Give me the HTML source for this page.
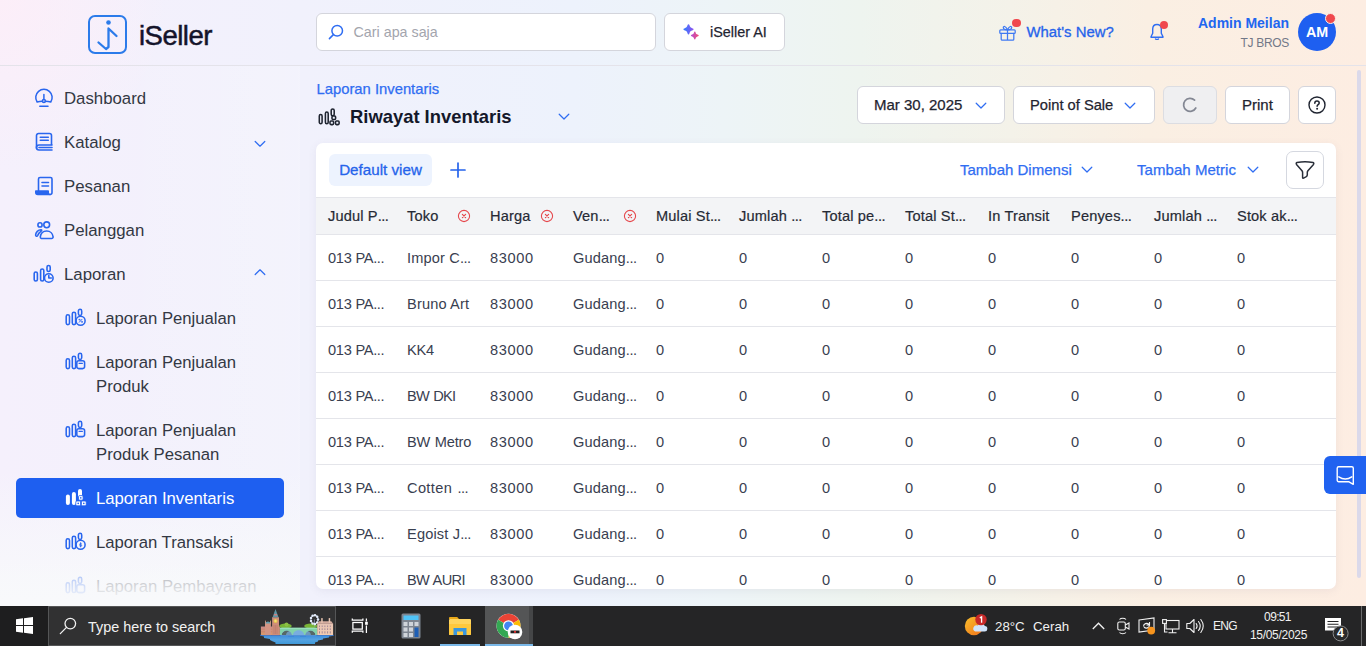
<!DOCTYPE html>
<html><head><meta charset="utf-8"><title>iSeller</title>
<style>
*{box-sizing:border-box;margin:0;padding:0}
html,body{width:1366px;height:646px;overflow:hidden}
body{font-family:"Liberation Sans",sans-serif;color:#2b2f3a;position:relative;
background:radial-gradient(circle at 0 0,rgba(253,238,248,.9) 0,rgba(253,238,248,0) 170px),linear-gradient(90deg,#f5f0fc 0%,#f1f1fc 22%,#edf2fc 42%,#edf4f7 53%,#eef4ef 63%,#f4f2e9 74%,#faefe3 84%,#fdede2 100%);}
svg{position:absolute;overflow:visible}
.t{position:absolute;white-space:nowrap}
#hdr{position:absolute;left:0;top:0;width:1366px;height:66px;border-bottom:1px solid #e4e3ea}
#logo{position:absolute;left:88px;top:15px;width:39px;height:39px;border:2px solid #2b7bea;border-radius:7px}
#brand{position:absolute;left:139px;top:17.500px;font-size:27.500px;line-height:36px;color:#14142b;letter-spacing:-0.500px;-webkit-text-stroke:.5px #14142b}
#search{position:absolute;left:316px;top:13px;width:340px;height:38px;background:#fff;border:1px solid #d4d5dc;border-radius:6px}
#search span{position:absolute;left:36.500px;top:0;line-height:36px;font-size:14.300px;color:#a3a5ad}
#ai{position:absolute;left:664px;top:13px;width:121px;height:38px;background:#fff;border:1px solid #d4d5dc;border-radius:6px}
#ai span{position:absolute;left:45px;top:0;line-height:36px;font-size:14.400px;color:#1f2430;-webkit-text-stroke:.25px #1f2430}
/* sidebar */
.mi{position:absolute;left:64px;margin-top:1px;font-size:16.8px;line-height:24px;color:#333843;white-space:nowrap}
.si{position:absolute;left:96px;margin-top:1px;font-size:16.700px;line-height:24px;color:#333843;white-space:nowrap}
#active{position:absolute;left:16px;top:478px;width:268px;height:40px;background:#1e5ff0;border-radius:5px}
#sov{position:absolute;left:0;top:66px;width:300px;height:540px;background:linear-gradient(90deg,rgba(255,255,255,0) 35%,rgba(255,255,255,.18) 100%)}
#sbg{position:absolute;left:0;top:470px;width:300px;height:136px;background:linear-gradient(180deg,rgba(248,249,251,0) 0%,rgba(248,249,251,.55) 50%,rgba(248,249,251,.95) 100%)}
#fade{position:absolute;left:0;top:562px;width:300px;height:44px;background:linear-gradient(180deg,rgba(248,249,251,0) 0%,rgba(248,249,251,.6) 50%,rgba(248,249,251,1) 92%)}
/* main */
.btn{position:absolute;top:86px;height:38px;background:#fff;border:1px solid #d4d5dc;border-radius:6px;font-size:15px;line-height:36px;color:#1f2430;white-space:nowrap;-webkit-text-stroke:.25px #1f2430}
.btn span{position:absolute;top:0}
#card{position:absolute;left:316px;top:143px;width:1020px;height:446px;background:#fff;border-radius:7px;overflow:hidden;box-shadow:0 2px 8px rgba(110,100,130,.09)}
#thead{position:absolute;left:0;top:54px;width:1020px;height:38px;background:#f3f4f6;border-top:1px solid #e4e5ea;border-bottom:1px solid #e4e5ea}
.th{position:absolute;top:0;line-height:36px;font-size:14.600px;color:#262a35;white-space:nowrap;letter-spacing:.15px;-webkit-text-stroke:.2px #262a35}
.e{letter-spacing:-.5px}
.n{letter-spacing:.65px !important}
.c0{letter-spacing:-.25px !important}
.xi{top:11px}
.row{position:absolute;left:0;width:1020px;height:46px;border-bottom:1px solid #e4e5ea}
.td{position:absolute;top:0;line-height:47px;font-size:14.600px;color:#394050;white-space:nowrap;letter-spacing:.15px}
#task{position:absolute;left:0;top:606px;width:1366px;height:40px;background:#252526;color:#fff}

</style></head><body>
<div id="hdr">
 <div id="logo"><svg style="left:0;top:0" width="35" height="35" viewBox="0 0 35 35"><circle cx="18.500" cy="5.500" r="2.300" fill="#2b7bea"/><path d="M8.5 25.5l7.5 6.5 2.5-2V11.5l8 7.5" fill="none" stroke="#2b7bea" stroke-width="2.300" stroke-linecap="round" stroke-linejoin="round"/></svg></div>
 <div id="brand">iSeller</div>
 <div id="search"><svg style="left:11px;top:10px" width="16" height="16" viewBox="0 0 16 16"><circle cx="9.2" cy="6.8" r="5.3" fill="none" stroke="#2f6df2" stroke-width="1.5"/><path d="M5.4 10.6L1.4 14.6" stroke="#2f6df2" stroke-width="1.5" stroke-linecap="round"/></svg><span>Cari apa saja</span></div>
 <div id="ai"><svg style="left:17px;top:9px" width="20" height="20" viewBox="0 0 20 20"><defs><linearGradient id="g1" x1="0" y1="0" x2="1" y2="0"><stop offset="0" stop-color="#2f7dff"/><stop offset="1" stop-color="#9152ee"/></linearGradient><linearGradient id="g2" x1="0" y1="0" x2="1" y2="0"><stop offset="0" stop-color="#b04fdc"/><stop offset="1" stop-color="#f54c6a"/></linearGradient></defs><path d="M6.500 1.200c.5 0 .7.300.9.900.6 2 1.200 2.700 3.300 3.300.6.200.9.500.9.900s-.3.700-.9.900c-2.100.600-2.700 1.300-3.300 3.300-.2.600-.4.900-.9.900s-.7-.3-.9-.9c-.6-2-1.200-2.700-3.300-3.300-.6-.2-.9-.5-.9-.9s.3-.7.900-.9c2.100-.6 2.700-1.300 3.300-3.300.2-.6.400-.9.900-.9z" fill="url(#g1)"/><path d="M12.800 8.600c.4 0 .6.250.7.700.45 1.500.9 2 2.500 2.500.45.150.7.350.7.700s-.25.550-.7.700c-1.600.500-2.050 1-2.500 2.500-.1.450-.3.700-.7.700s-.6-.25-.7-.7c-.45-1.500-.9-2-2.500-2.500-.45-.15-.7-.35-.7-.7s.25-.55.700-.7c1.600-.5 2.050-1 2.500-2.500.1-.45.300-.7.700-.7z" fill="url(#g2)"/></svg><span>iSeller AI</span></div>
 <!-- right -->
 <svg style="left:999px;top:25px" width="17" height="16" viewBox="0 0 17 16"><g fill="none" stroke="#3f7af3" stroke-width="1.250" stroke-linejoin="round" stroke-linecap="round"><rect x=".8" y="4.800" width="15.400" height="3.600" rx=".9"/><path d="M2.200 8.400v5.800a1 1 0 001 1h10.600a1 1 0 001-1V8.400M8.500 4.800v10.400"/><path d="M8.500 4.800C6.600 4.800 4.300 4.200 4.300 2.600S6.700.5 8.500 4.800C10.300.5 12.700 1 12.700 2.600S10.400 4.800 8.500 4.800z"/></g></svg>
 <div class="t" style="left:1012px;top:18.500px;width:8.500px;height:8.500px;border-radius:50%;background:#f0484e"></div>
 <div class="t" style="left:1026.500px;top:20px;font-size:14.900px;line-height:24px;color:#2563eb;-webkit-text-stroke:.3px #2563eb">What's New?</div>
 <svg style="left:1150px;top:23px" width="14" height="17" viewBox="0 0 14 17"><g fill="none" stroke="#2f6df2" stroke-width="1.400" stroke-linejoin="round" stroke-linecap="round"><path d="M7 1.500c-2.600 0-4.300 1.900-4.300 4.500v4.200L1 13.700v.500h12v-.5l-1.700-3.500V6c0-2.600-1.700-4.500-4.300-4.500z"/><path d="M5.500 16c.4.300.9.400 1.500.4s1.100-.1 1.500-.4"/></g></svg>
 <div class="t" style="left:1159.500px;top:20.500px;width:8.800px;height:8.800px;border-radius:50%;background:#f0484e"></div>
 <div class="t" style="left:1089px;top:12px;width:200px;text-align:right;font-size:14px;line-height:22px;font-weight:bold;color:#2166f0">Admin Meilan</div>
 <div class="t" style="left:1089px;top:34px;width:200px;text-align:right;font-size:12px;letter-spacing:-.3px;line-height:18px;color:#727887">TJ BROS</div>
 <div class="t" style="left:1298px;top:13px;width:38px;height:38px;border-radius:50%;background:#1e5ff0;color:#fff;font-weight:bold;font-size:14.300px;line-height:38px;text-align:center">AM</div>
 <div class="t" style="left:1325.300px;top:12.500px;width:11px;height:11px;border-radius:50%;background:#f0484e;border:1.200px solid #fbeee6"></div>
</div>

<div id="side">
 <div id="sov"></div>
 <div id="sbg"></div>
 <!-- dashboard -->
 <svg style="left:34px;top:88px" width="20" height="20" viewBox="0 0 20 20"><g fill="none" stroke="#2966ee" stroke-width="1.500" stroke-linecap="round" stroke-linejoin="round"><path d="M8.400 13.200Q5.500 13.300 3.100 14A8.200 8.200 0 1116.800 14Q14.400 13.300 11.400 13.200"/><circle cx="9.900" cy="13.100" r="1.500"/><path d="M9.900 11.500V6.400M5.800 18.300h8.200"/></g></svg>
 <div class="mi" style="top:86px">Dashboard</div>
 <!-- katalog -->
 <svg style="left:34px;top:132px" width="20" height="20" viewBox="0 0 20 20"><g fill="none" stroke="#2966ee" stroke-width="1.6" stroke-linecap="round" stroke-linejoin="round"><path d="M17.500 12.500V3.500a2 2 0 00-2-2h-11a2 2 0 00-2 2v12.700"/><path d="M18 13H5a2.500 2.500 0 000 5h13M5 15.500h13M6.300 5.300h8M6.300 8.300h8"/></g></svg>
 <div class="mi" style="top:130px">Katalog</div>
 <svg style="left:254px;top:139.500px" width="12" height="8" viewBox="0 0 12 8"><path d="M1.200 1.500L6 6.200l4.800-4.700" fill="none" stroke="#2f6df2" stroke-width="1.250" stroke-linecap="round" stroke-linejoin="round"/></svg>
 <!-- pesanan -->
 <svg style="left:34px;top:176px" width="20" height="20" viewBox="0 0 20 20"><g fill="none" stroke="#2966ee" stroke-width="1.600" stroke-linecap="round" stroke-linejoin="round"><path d="M4.500 14.500V3a1.500 1.500 0 011.500-1.500h10.500A1.500 1.500 0 0118 3v13.500a2 2 0 01-2 2"/><path d="M8 6.500h6.500M8 10h6.500"/><path d="M1.800 15h12.400v1.500a2 2 0 002 2H3.800a2 2 0 01-2-2z" fill="#2966ee"/></g></svg>
 <div class="mi" style="top:174px">Pesanan</div>
 <!-- pelanggan -->
 <svg style="left:34px;top:220px" width="20" height="20" viewBox="0 0 20 20"><g fill="none" stroke="#2966ee" stroke-width="1.600" stroke-linecap="round" stroke-linejoin="round"><circle cx="6" cy="4.900" r="2.100"/><circle cx="12.700" cy="4.800" r="2.900"/><path d="M7.300 18.500h10.300a1.500 1.500 0 001.500-1.600c-.3-3.300-2.800-5.900-6.400-5.900s-6 2.600-6.400 5.900a1.500 1.500 0 001 1.600z"/><path d="M7 9.700C4.200 9.700 1.700 12.500 1.600 15.100C1.600 16.400 3.100 16.700 3.700 15.500C4.400 13.700 5.600 12.200 7.400 10.900C8 10.400 7.800 9.700 7 9.700Z"/></g></svg>
 <div class="mi" style="top:218px">Pelanggan</div>
 <!-- laporan -->
 <svg style="left:33px;top:264px" width="22" height="20" viewBox="0 0 22 20"><g fill="none" stroke="#2966ee" stroke-width="1.600" stroke-linecap="round" stroke-linejoin="round"><rect x="1.200" y="8" width="3.200" height="9" rx="1.600"/><rect x="7.600" y="5" width="3.200" height="12" rx="1.600"/><rect x="14" y="1.500" width="3.200" height="6" rx="1.600"/><circle cx="15.800" cy="14" r="4.300"/><path d="M15.800 11.500V14h2.500"/></g></svg>
 <div class="mi" style="top:262px">Laporan</div>
 <svg style="left:254px;top:268px" width="12" height="8" viewBox="0 0 12 8"><path d="M1.200 6.500L6 1.800l4.800 4.700" fill="none" stroke="#2f6df2" stroke-width="1.250" stroke-linecap="round" stroke-linejoin="round"/></svg>
 <!-- sub items -->
 <svg style="left:65px;top:308px" width="22" height="20" viewBox="0 0 22 20"><g fill="none" stroke="#2966ee" stroke-width="1.550" stroke-linecap="round" stroke-linejoin="round"><rect x="1.200" y="6.800" width="3.300" height="9.800" rx="1.650"/><rect x="7.300" y="4.200" width="3.300" height="12.400" rx="1.650"/><rect x="13.400" y="1.300" width="3.300" height="6.200" rx="1.650"/><circle cx="15.600" cy="12.800" r="4.500"/><path d="M14.300 14.200l2.600-2.800" stroke-width="1"/><circle cx="14.300" cy="11.700" r=".5" stroke-width=".8"/><circle cx="16.900" cy="13.900" r=".5" stroke-width=".8"/></g></svg>
 <div class="si" style="top:306px">Laporan Penjualan</div>
 <svg style="left:65px;top:352px" width="22" height="20" viewBox="0 0 22 20"><g fill="none" stroke="#2966ee" stroke-width="1.550" stroke-linecap="round" stroke-linejoin="round"><rect x="1.200" y="6.800" width="3.300" height="9.800" rx="1.650"/><rect x="7.300" y="4.200" width="3.300" height="12.400" rx="1.650"/><rect x="13.400" y="1.300" width="3.300" height="6.200" rx="1.650"/><rect x="11.800" y="8.800" width="7.800" height="7.800" rx="2"/><path d="M14 11.300h3.400" stroke-width="1.200"/></g></svg>
 <div class="si" style="top:350px">Laporan Penjualan<br>Produk</div>
 <svg style="left:65px;top:420px" width="22" height="20" viewBox="0 0 22 20"><g fill="none" stroke="#2966ee" stroke-width="1.550" stroke-linecap="round" stroke-linejoin="round"><rect x="1.200" y="6.800" width="3.300" height="9.800" rx="1.650"/><rect x="7.300" y="4.200" width="3.300" height="12.400" rx="1.650"/><rect x="13.400" y="1.300" width="3.300" height="6.200" rx="1.650"/><rect x="11.800" y="8.800" width="7.800" height="7.800" rx="2"/><path d="M14 11.300h3.400" stroke-width="1.200"/></g></svg>
 <div class="si" style="top:418px">Laporan Penjualan<br>Produk Pesanan</div>
 <div id="active"></div>
 <svg style="left:65px;top:488px" width="22" height="20" viewBox="0 0 22 20"><g fill="#fff" stroke="none"><rect x=".9" y="6.600" width="4" height="10.400" rx="2"/><rect x="6.900" y="4" width="4" height="13" rx="2"/><rect x="13" y="1" width="4" height="9" rx="2"/></g><g fill="#fff" stroke="#1e5ff0" stroke-width=".8"><rect x="13.500" y="7.600" width="4.600" height="4.600" rx="1.100"/><rect x="10.800" y="13" width="4.800" height="4.800" rx="1.100"/><rect x="16.400" y="13" width="4.800" height="4.800" rx="1.100"/></g><g fill="#1e5ff0"><circle cx="15.800" cy="9.900" r=".8"/><circle cx="13.200" cy="15.400" r=".8"/><circle cx="18.800" cy="15.400" r=".8"/></g></svg>
 <div class="si" style="top:486px;color:#fff">Laporan Inventaris</div>
 <svg style="left:65px;top:532px" width="22" height="20" viewBox="0 0 22 20"><g fill="none" stroke="#2966ee" stroke-width="1.550" stroke-linecap="round" stroke-linejoin="round"><rect x="1.200" y="6.800" width="3.300" height="9.800" rx="1.650"/><rect x="7.300" y="4.200" width="3.300" height="12.400" rx="1.650"/><rect x="13.400" y="1.300" width="3.300" height="6.200" rx="1.650"/><circle cx="15.600" cy="12.800" r="4.500"/><path d="M14.500 13.900c.3.600 2.100.700 2.200-.2s-2-.5-2.100-1.400 1.600-.9 2.100-.3M15.600 10.700v4.200" stroke-width=".9"/></g></svg>
 <div class="si" style="top:530px">Laporan Transaksi</div>
 <svg style="left:65px;top:576px;opacity:.5" width="22" height="20" viewBox="0 0 22 20"><g fill="none" stroke="#2966ee" stroke-width="1.550" stroke-linecap="round" stroke-linejoin="round"><rect x="1.200" y="6.800" width="3.300" height="9.800" rx="1.650"/><rect x="7.300" y="4.200" width="3.300" height="12.400" rx="1.650"/><rect x="13.400" y="1.300" width="3.300" height="6.200" rx="1.650"/><rect x="11.800" y="8.800" width="7.800" height="7.800" rx="2"/></g></svg>
 <div class="si" style="top:574px;opacity:.5">Laporan Pembayaran</div>
 <div id="fade"></div>
</div>

<div id="main">
 <div class="t" style="left:316.500px;top:78px;font-size:14.800px;line-height:22px;color:#2f6df2;-webkit-text-stroke:.25px #2f6df2">Laporan Inventaris</div>
 <svg style="left:318px;top:107px" width="22" height="20" viewBox="0 0 22 20"><g fill="none" stroke="#1f2430" stroke-width="1.550" stroke-linejoin="round"><rect x="1.300" y="7.500" width="2.800" height="9.200" rx="1.400"/><rect x="7.400" y="5" width="2.800" height="11.700" rx="1.400"/><rect x="13.200" y="1.900" width="3" height="6.800" rx="1.500"/><g fill="#eef0fb"><rect x="14" y="8.900" width="3.600" height="3.600" rx="1"/><rect x="12" y="14" width="3.600" height="3.600" rx="1"/><rect x="17.500" y="14" width="3.600" height="3.600" rx="1"/></g></g></svg>
 <div class="t" style="left:350px;top:104px;font-size:18.4px;line-height:26px;font-weight:bold;color:#14182a">Riwayat Inventaris</div>
 <svg style="left:558px;top:113px" width="12" height="8" viewBox="0 0 12 8"><path d="M1.200 1.200L6 6l4.800-4.800" fill="none" stroke="#2f6df2" stroke-width="1.250" stroke-linecap="round" stroke-linejoin="round"/></svg>

 <div class="btn" style="left:857px;width:148px"><span style="left:16px">Mar 30, 2025</span><svg style="left:117px;top:15px" width="12" height="8" viewBox="0 0 12 8"><path d="M1.200 1.200L6 6l4.800-4.800" fill="none" stroke="#2f6df2" stroke-width="1.250" stroke-linecap="round" stroke-linejoin="round"/></svg></div>
 <div class="btn" style="left:1013px;width:142px"><span style="left:16px;font-size:14.700px">Point of Sale</span><svg style="left:110px;top:15px" width="12" height="8" viewBox="0 0 12 8"><path d="M1.200 1.200L6 6l4.800-4.800" fill="none" stroke="#2f6df2" stroke-width="1.250" stroke-linecap="round" stroke-linejoin="round"/></svg></div>
 <div class="btn" style="left:1163px;width:54px;background:#efeff1;border-color:#dcdde2"><svg style="left:18px;top:10px" width="16" height="16" viewBox="0 0 16 16"><path d="M12.600 3.200A6.500 6.500 0 1013.800 11" fill="none" stroke="#838793" stroke-width="1.700" stroke-linecap="round"/></svg></div>
 <div class="btn" style="left:1225px;width:65px"><span style="left:16px">Print</span></div>
 <div class="btn" style="left:1298px;width:38px"><svg style="left:9px;top:9px" width="18" height="18" viewBox="0 0 18 18"><circle cx="9" cy="9" r="8" fill="none" stroke="#1f2430" stroke-width="1.400"/><path d="M6.800 7.200c0-1.400 1-2.200 2.200-2.200s2.200.8 2.200 2c0 1.600-2.100 1.700-2.100 3.300" fill="none" stroke="#1f2430" stroke-width="1.500" stroke-linecap="round"/><circle cx="9.100" cy="12.800" r="1" fill="#1f2430"/></svg></div>
</div>
<div id="card">
 <div class="t" style="left:13px;top:11px;width:103px;height:32px;border-radius:6px;background:#edf3fe;color:#2563eb;font-size:15.200px;line-height:32px;text-align:center;-webkit-text-stroke:.3px #2563eb">Default view</div>
 <svg style="left:134px;top:19px" width="16" height="16" viewBox="0 0 16 16"><path d="M8 1v14M1 8h14" stroke="#2563eb" stroke-width="1.700" stroke-linecap="round"/></svg>
 <div class="t" style="left:644px;top:16px;font-size:15px;line-height:22px;color:#2f6df2;letter-spacing:0;-webkit-text-stroke:.25px #2f6df2">Tambah Dimensi</div>
 <svg style="left:765px;top:23px" width="12" height="8" viewBox="0 0 12 8"><path d="M1.200 1.200L6 6l4.800-4.800" fill="none" stroke="#2f6df2" stroke-width="1.250" stroke-linecap="round" stroke-linejoin="round"/></svg>
 <div class="t" style="left:821px;top:16px;font-size:15px;line-height:22px;color:#2f6df2;letter-spacing:.05px;-webkit-text-stroke:.25px #2f6df2">Tambah Metric</div>
 <svg style="left:931px;top:23px" width="12" height="8" viewBox="0 0 12 8"><path d="M1.200 1.200L6 6l4.800-4.800" fill="none" stroke="#2f6df2" stroke-width="1.250" stroke-linecap="round" stroke-linejoin="round"/></svg>
 <div class="t" style="left:970px;top:8px;width:38px;height:38px;border:1px solid #d5d8e0;border-radius:7px;background:#fff"><svg style="left:-1px;top:-1px" width="38" height="38" viewBox="0 0 38 38"><path d="M11 11.500Q19 9.900 27 11.500Q28.300 12 27.500 13.400L21.900 19.700Q21.300 20.500 21.300 21.500L21.300 23.800Q21.300 25 20.300 25.600L17.600 27.100Q16.600 27.500 16.600 26.400L16.600 21.500Q16.600 20.500 16 19.700L10.500 13.400Q9.700 12 11 11.500Z" fill="none" stroke="#2a2f3a" stroke-width="1.500" stroke-linejoin="round"/></svg></div>
<div id="thead"><span class="th" style="left:12px">Judul P<span class="e">...</span></span><span class="th" style="left:91px">Toko</span><span class="th" style="left:174px">Harga</span><span class="th" style="left:257px">Ven<span class="e">...</span></span><span class="th" style="left:340px">Mulai St<span class="e">...</span></span><span class="th" style="left:423px">Jumlah <span class="e">...</span></span><span class="th" style="left:506px">Total pe<span class="e">...</span></span><span class="th" style="left:589px">Total St<span class="e">...</span></span><span class="th" style="left:672px">In Transit</span><span class="th" style="left:755px">Penyes<span class="e">...</span></span><span class="th" style="left:838px">Jumlah <span class="e">...</span></span><span class="th" style="left:921px">Stok ak<span class="e">...</span></span><svg class="xi" style="left:141px" width="14" height="14" viewBox="0 0 14 14"><circle cx="7" cy="7" r="5.6" fill="none" stroke="#e5484d" stroke-width="1.1"/><path d="M5.400 5.400l3.200 3.200M8.600 5.400l-3.200 3.200" stroke="#e5484d" stroke-width="1.2" stroke-linecap="round"/></svg><svg class="xi" style="left:224px" width="14" height="14" viewBox="0 0 14 14"><circle cx="7" cy="7" r="5.6" fill="none" stroke="#e5484d" stroke-width="1.1"/><path d="M5.400 5.400l3.200 3.200M8.600 5.400l-3.200 3.200" stroke="#e5484d" stroke-width="1.2" stroke-linecap="round"/></svg><svg class="xi" style="left:307px" width="14" height="14" viewBox="0 0 14 14"><circle cx="7" cy="7" r="5.6" fill="none" stroke="#e5484d" stroke-width="1.1"/><path d="M5.400 5.400l3.200 3.200M8.600 5.400l-3.200 3.200" stroke="#e5484d" stroke-width="1.2" stroke-linecap="round"/></svg></div>
<div class="row" style="top:92px"><span class="td c0" style="left:12px">013 PA<span class="e">...</span></span><span class="td" style="left:91px">Impor C<span class="e">...</span></span><span class="td n" style="left:174px">83000</span><span class="td" style="left:257px">Gudang<span class="e">...</span></span><span class="td" style="left:340px">0</span><span class="td" style="left:423px">0</span><span class="td" style="left:506px">0</span><span class="td" style="left:589px">0</span><span class="td" style="left:672px">0</span><span class="td" style="left:755px">0</span><span class="td" style="left:838px">0</span><span class="td" style="left:921px">0</span></div>
<div class="row" style="top:138px"><span class="td c0" style="left:12px">013 PA<span class="e">...</span></span><span class="td" style="left:91px">Bruno Art</span><span class="td n" style="left:174px">83000</span><span class="td" style="left:257px">Gudang<span class="e">...</span></span><span class="td" style="left:340px">0</span><span class="td" style="left:423px">0</span><span class="td" style="left:506px">0</span><span class="td" style="left:589px">0</span><span class="td" style="left:672px">0</span><span class="td" style="left:755px">0</span><span class="td" style="left:838px">0</span><span class="td" style="left:921px">0</span></div>
<div class="row" style="top:184px"><span class="td c0" style="left:12px">013 PA<span class="e">...</span></span><span class="td" style="left:91px;letter-spacing:-0.27px;word-spacing:.9px">KK4</span><span class="td n" style="left:174px">83000</span><span class="td" style="left:257px">Gudang<span class="e">...</span></span><span class="td" style="left:340px">0</span><span class="td" style="left:423px">0</span><span class="td" style="left:506px">0</span><span class="td" style="left:589px">0</span><span class="td" style="left:672px">0</span><span class="td" style="left:755px">0</span><span class="td" style="left:838px">0</span><span class="td" style="left:921px">0</span></div>
<div class="row" style="top:230px"><span class="td c0" style="left:12px">013 PA<span class="e">...</span></span><span class="td" style="left:91px;letter-spacing:-0.75px;word-spacing:.9px">BW DKI</span><span class="td n" style="left:174px">83000</span><span class="td" style="left:257px">Gudang<span class="e">...</span></span><span class="td" style="left:340px">0</span><span class="td" style="left:423px">0</span><span class="td" style="left:506px">0</span><span class="td" style="left:589px">0</span><span class="td" style="left:672px">0</span><span class="td" style="left:755px">0</span><span class="td" style="left:838px">0</span><span class="td" style="left:921px">0</span></div>
<div class="row" style="top:276px"><span class="td c0" style="left:12px">013 PA<span class="e">...</span></span><span class="td" style="left:91px;letter-spacing:-0.20px;word-spacing:.9px">BW Metro</span><span class="td n" style="left:174px">83000</span><span class="td" style="left:257px">Gudang<span class="e">...</span></span><span class="td" style="left:340px">0</span><span class="td" style="left:423px">0</span><span class="td" style="left:506px">0</span><span class="td" style="left:589px">0</span><span class="td" style="left:672px">0</span><span class="td" style="left:755px">0</span><span class="td" style="left:838px">0</span><span class="td" style="left:921px">0</span></div>
<div class="row" style="top:322px"><span class="td c0" style="left:12px">013 PA<span class="e">...</span></span><span class="td" style="left:91px;letter-spacing:0.35px;word-spacing:.9px">Cotten <span class="e">...</span></span><span class="td n" style="left:174px">83000</span><span class="td" style="left:257px">Gudang<span class="e">...</span></span><span class="td" style="left:340px">0</span><span class="td" style="left:423px">0</span><span class="td" style="left:506px">0</span><span class="td" style="left:589px">0</span><span class="td" style="left:672px">0</span><span class="td" style="left:755px">0</span><span class="td" style="left:838px">0</span><span class="td" style="left:921px">0</span></div>
<div class="row" style="top:368px"><span class="td c0" style="left:12px">013 PA<span class="e">...</span></span><span class="td" style="left:91px">Egoist J<span class="e">...</span></span><span class="td n" style="left:174px">83000</span><span class="td" style="left:257px">Gudang<span class="e">...</span></span><span class="td" style="left:340px">0</span><span class="td" style="left:423px">0</span><span class="td" style="left:506px">0</span><span class="td" style="left:589px">0</span><span class="td" style="left:672px">0</span><span class="td" style="left:755px">0</span><span class="td" style="left:838px">0</span><span class="td" style="left:921px">0</span></div>
<div class="row" style="top:414px"><span class="td c0" style="left:12px">013 PA<span class="e">...</span></span><span class="td" style="left:91px;letter-spacing:-0.68px;word-spacing:.9px">BW AURI</span><span class="td n" style="left:174px">83000</span><span class="td" style="left:257px">Gudang<span class="e">...</span></span><span class="td" style="left:340px">0</span><span class="td" style="left:423px">0</span><span class="td" style="left:506px">0</span><span class="td" style="left:589px">0</span><span class="td" style="left:672px">0</span><span class="td" style="left:755px">0</span><span class="td" style="left:838px">0</span><span class="td" style="left:921px">0</span></div>

</div>
<div class="t" style="left:1357px;top:70px;width:4px;height:508px;border-radius:2px;background:#dbd9ea"></div>
<div class="t" style="left:1324px;top:456px;width:42px;height:38px;border-radius:6px 0 0 6px;background:#2062f0"><svg style="left:0;top:0" width="42" height="38" viewBox="0 0 42 38"><path d="M13.200 12.300A1.500 1.500 0 0114.700 10.800H27.800A1.500 1.500 0 0129.300 12.300V28.300L25 25.800H14.700A1.500 1.500 0 0113.200 24.300Z" fill="none" stroke="#fff" stroke-width="1.400" stroke-linejoin="round"/><path d="M14.800 20.800Q21.300 25.300 27.800 20.800" fill="none" stroke="#fff" stroke-width="1.400" stroke-linecap="round"/></svg></div>

<div id="task">
 <div class="t" style="left:0;top:0;width:48px;height:40px;background:#1e1e1f"></div>
 <svg style="left:16px;top:11px" width="17" height="17" viewBox="0 0 17 17"><path d="M0 2.300L7 1.300V8H0zM8 1.150L17 0v8H8zM0 9h7v6.700L0 14.700zM8 9h9v8l-9-1.200z" fill="#fff"/></svg>
 <div class="t" style="left:48px;top:0;width:288px;height:40px;background:#313132;border:1px solid #555657"></div>
 <svg style="left:59px;top:11px" width="18" height="18" viewBox="0 0 18 18"><circle cx="11.300" cy="6.600" r="5.300" fill="none" stroke="#f2f2f2" stroke-width="1.300"/><path d="M7.500 10.400L1.300 16.600" stroke="#f2f2f2" stroke-width="1.300" stroke-linecap="round"/></svg>
 <div class="t" style="left:88px;top:10.500px;font-size:14.400px;line-height:20px;color:#f1f1f1">Type here to search</div>
 <!-- london art -->
 <svg style="left:255px;top:0px" width="85" height="40" viewBox="0 0 85 40">
  <defs><linearGradient id="wt" x1="0" y1="0" x2="0" y2="1"><stop offset="0" stop-color="#3b8bdc"/><stop offset=".5" stop-color="#55a2e2"/><stop offset="1" stop-color="#3f9ad8"/></linearGradient>
  <linearGradient id="pb" x1="0" y1="0" x2="0" y2="1"><stop offset="0" stop-color="#c98a8a"/><stop offset="1" stop-color="#dc9a68"/></linearGradient>
  <linearGradient id="rb" x1="0" y1="0" x2="0" y2="1"><stop offset="0" stop-color="#e6c3b4"/><stop offset="1" stop-color="#f4cdb0"/></linearGradient></defs>
  <path d="M5 29h73.500v.700l-4.500.900v1l-6 1v1l-5 1v1l-3 1v1.500H20.500V36.500l-2.500-1-3-1.500v-1l-6-1v-1.500l-4-.900z" fill="url(#wt)"/>
  <path d="M5 29.200h73.500" stroke="#1f5fc4" stroke-width=".8"/>
  <path d="M33 29.800h6M45 29.800h6" stroke="#2a6fd0" stroke-width=".8"/>
  <rect x="5.900" y="20.500" width="19" height="8.600" fill="url(#pb)"/>
  <path d="M5.900 23.200h19M5.900 25.800h19" stroke="#c07a66" stroke-width=".5"/>
  <rect x="10" y="16.500" width="5.900" height="12.600" fill="#d29484"/><path d="M10 17.500Q13 13.500 15.900 17.500z" fill="#5f9fb0"/><rect x="10" y="14.600" width=".8" height="3" fill="#d9a08c"/><rect x="15.100" y="14.600" width=".8" height="3" fill="#d9a08c"/>
  <rect x="17.100" y="11.200" width="6.900" height="17.900" fill="#cd8d7a"/>
  <path d="M17.600 11.200L20.500 3.100L23.500 11.200z" fill="#5d96a6"/><path d="M19.200 8h2.700l.5 1.500h-3.700z" fill="#c98080"/>
  <circle cx="20.500" cy="14.900" r="2" fill="#e8c84a"/><circle cx="20.500" cy="14.900" r="1.100" fill="#f6e07a"/>
  <path d="M19 19v9M20.500 19v9M22 19v9" stroke="#b9776a" stroke-width=".6"/>
  <ellipse cx="30.500" cy="20" rx="6.200" ry="2.600" fill="#78b436"/><circle cx="31.500" cy="18.600" r="2" fill="#8cc044"/>
  <ellipse cx="55.700" cy="20" rx="6.500" ry="2.400" fill="#78b436"/>
  <path d="M59.400 13.500v7" stroke="#9aa8c8" stroke-width=".7"/>
  <ellipse cx="59.400" cy="13.600" rx="3.600" ry="4.400" fill="none" stroke="#b9c6e6" stroke-width=".8"/>
  <circle cx="63.0" cy="13.6" r="1.25" fill="#e3ebf9"/><circle cx="62.2" cy="16.4" r="1.25" fill="#e3ebf9"/><circle cx="60.0" cy="17.9" r="1.25" fill="#e3ebf9"/><circle cx="57.6" cy="17.4" r="1.25" fill="#e3ebf9"/><circle cx="56.0" cy="15.1" r="1.25" fill="#e3ebf9"/><circle cx="56.0" cy="12.1" r="1.25" fill="#e3ebf9"/><circle cx="57.6" cy="9.8" r="1.25" fill="#e3ebf9"/><circle cx="60.0" cy="9.3" r="1.25" fill="#e3ebf9"/><circle cx="62.2" cy="10.8" r="1.25" fill="#e3ebf9"/>
  <rect x="25.500" y="23.500" width="36" height="6" fill="#79addf"/>
  <path d="M26.600 29.100c.6-6 9.800-6 10.400 0z" fill="#4d5648" opacity=".8"/><path d="M50.200 29.100c.6-6 9.700-6 10.300 0z" fill="#4d5648" opacity=".8"/>
  <path d="M31 29.100c.3-3 3-4.500 6-4.500v4.500zM56 29.100c-.3-3-3-4.500-5.800-4.500v4.500z" fill="#79addf" opacity=".7"/>
  <path d="M24.900 21.800H62.200V29.100H60.500c-.6-6-9.700-6-10.300 0H49.300c-.7-6.600-10.700-6.600-11.400 0H37c-.6-6-9.800-6-10.400 0H24.900Z" fill="#82d2aa"/>
  <path d="M24.900 22.300h37.300" stroke="#9fe3c0" stroke-width="1"/>
  <rect x="62.200" y="17.500" width="15.900" height="11.600" fill="url(#rb)"/>
  <path d="M62.200 17.800L64 15.200h12.300l1.800 2.600z" fill="#d3ab9e"/>
  <rect x="66.200" y="12.100" width="1.500" height="4.700" fill="#e8c4b0"/><rect x="73.700" y="12.100" width="1.500" height="4.700" fill="#e8c4b0"/>
  <path d="M64.500 19.500v1.600M67.200 19.500v1.600M69.900 19.500v1.600M72.600 19.500v1.600M75.300 19.500v1.600M64.500 22.300v1.700M67.200 22.300v1.700M69.900 22.300v1.700M72.600 22.300v1.700M75.300 22.300v1.700M64.500 25.300v2.200M67.200 25.300v2.200M69.900 25.300v2.200M72.600 25.300v2.200M75.300 25.300v2.200" stroke="#a58a98" stroke-width="1"/>
 </svg>
 <!-- task view -->
 <svg style="left:340px;top:0" width="40" height="40" viewBox="0 0 40 40"><g fill="none" stroke="#fff" stroke-width="1.250"><path d="M12.300 12.400v1.600h10.600v-1.600M12.300 26.800v-1.600h10.600v1.600"/><rect x="12.900" y="16.500" width="9.400" height="6.600"/><path d="M26.400 12.400v3M26.400 19.500v7.500"/></g><rect x="25.100" y="15.800" width="2.700" height="3" fill="#fff"/></svg>
 <!-- calculator -->
 <svg style="left:401px;top:7px" width="20" height="26" viewBox="0 0 20 26"><rect x=".5" y=".5" width="19" height="25" rx="1.500" fill="#7d8590"/><rect x="2.500" y="2.500" width="15" height="4.500" fill="#4fc3f7"/><g fill="#cfd4da"><rect x="2.500" y="9" width="4" height="4"/><rect x="8" y="9" width="4" height="4"/><rect x="13.500" y="9" width="4" height="4"/><rect x="2.500" y="14.500" width="4" height="4"/><rect x="8" y="14.500" width="4" height="4"/><rect x="2.500" y="20" width="4" height="4"/><rect x="8" y="20" width="4" height="4"/></g><rect x="13.500" y="14.500" width="4" height="9.500" fill="#1e5fb5"/></svg>
 <!-- explorer -->
 <svg style="left:448px;top:10px" width="24" height="20" viewBox="0 0 24 20"><path d="M1 2.200c0-.7.500-1.200 1.200-1.200h7l1.800 2H1z" fill="#e8a818"/><rect x="1" y="3" width="22" height="16" rx="1" fill="#ffd45e"/><path d="M1 8h22v10a1 1 0 01-1 1H2a1 1 0 01-1-1z" fill="#ffc83d"/><path d="M5.500 12h13v7h-3.500v-3.500h-6V19H5.500z" fill="#3a96dd"/></svg>
 <div class="t" style="left:440px;top:38px;width:40px;height:2px;background:#7ab8e8"></div>
 <!-- chrome -->
 <div class="t" style="left:485px;top:0;width:44px;height:40px;background:#545556"></div>
 <div class="t" style="left:529px;top:0;width:4px;height:40px;background:#454647"></div>
 <div class="t" style="left:485px;top:38px;width:48px;height:2px;background:#7ab8e8"></div>
 <svg style="left:496px;top:7px" width="30" height="30" viewBox="0 0 30 30"><circle cx="12.500" cy="12.800" r="12" fill="#fff"/><path d="M12.500 12.800L2.110 6.800A12 12 0 0122.890 6.800z" fill="#ea4335"/><path d="M12.500 12.800L22.890 6.800A12 12 0 0112.500 24.800z" fill="#fbbc04"/><path d="M12.500 12.800L12.500 24.800A12 12 0 012.110 6.800z" fill="#34a853"/><circle cx="12.500" cy="12.800" r="5.600" fill="#fff"/><circle cx="12.500" cy="12.800" r="4.400" fill="#4285f4"/><circle cx="19" cy="19" r="7.300" fill="#fff"/><rect x="14.500" y="17.500" width="9" height="2.800" fill="#222"/><rect x="18" y="18" width="2" height="1.800" fill="#d33"/></svg>
 <!-- weather -->
 <svg style="left:962px;top:0px" width="30" height="30" viewBox="0 0 30 30"><defs><linearGradient id="sun" x1="0" y1="0" x2="1" y2="1"><stop offset="0" stop-color="#f9c02c"/><stop offset="1" stop-color="#f0701a"/></linearGradient></defs><circle cx="12" cy="20" r="9.200" fill="url(#sun)"/><path d="M13.300 25.500h9.200a2.700 2.700 0 00.300-5.400 3.700 3.700 0 00-7-.6 3.100 3.100 0 00-2.500 6z" fill="#cfe3fb"/><circle cx="19" cy="13.600" r="5.700" fill="#c62828"/><path d="M17.800 11.900l1.800-1v5.800" fill="none" stroke="#fff" stroke-width="1.300"/></svg>
 <div class="t" style="left:995px;top:10.500px;font-size:13.300px;line-height:20px;color:#f1f1f1">28°C</div>
 <div class="t" style="left:1033px;top:10.500px;font-size:13.300px;line-height:20px;color:#f1f1f1">Cerah</div>
 <svg style="left:1092px;top:16px" width="13" height="8" viewBox="0 0 13 8"><path d="M.8 7L6.500 1.200 12.200 7" fill="none" stroke="#f1f1f1" stroke-width="1.300"/></svg>
 <!-- camera -->
 <svg style="left:1117px;top:11px" width="13" height="18" viewBox="0 0 13 18"><g fill="none" stroke="#f1f1f1" stroke-width="1.100"><rect x=".8" y="5" width="7.500" height="8" rx="1.500"/><path d="M8.300 8l3.700-2v6l-3.700-2M2.500 2.500c1.500-1.700 5-1.700 6.500 0M2.500 15.500c1.500 1.700 5 1.700 6.500 0"/></g></svg>
 <!-- sync -->
 <svg style="left:1138px;top:11px" width="19" height="18" viewBox="0 0 19 18"><g fill="none" stroke="#f1f1f1" stroke-width="1.100"><path d="M1 3l15-2v12L1 15z"/><path d="M5.500 9.500c0-3 3.500-4 5.500-2M11.500 5v3h-3M11.500 8c0 3-3.500 4-5.500 2"/></g><circle cx="13.200" cy="13.600" r="3.900" fill="#f7941d"/></svg>
 <!-- network -->
 <svg style="left:1162px;top:13px" width="18" height="15" viewBox="0 0 18 15"><g fill="none" stroke="#f1f1f1" stroke-width="1.100"><rect x="4" y="1.500" width="13" height="8.500"/><path d="M10.500 10v3.500M6.500 13.800h8"/><rect x=".6" y=".6" width="3.800" height="3.800" fill="#252526"/><path d="M2.500 4.500V13h3"/></g></svg>
 <!-- volume -->
 <svg style="left:1186px;top:12px" width="18" height="16" viewBox="0 0 18 16"><g fill="none" stroke="#f1f1f1" stroke-width="1.100" stroke-linecap="round"><path d="M.8 5.500h3L8 1.500v13l-4.200-4h-3z" stroke-linejoin="round"/><path d="M10.200 5.500c1 1.400 1 3.600 0 5M12.500 3.500c2 2.600 2 6.400 0 9M14.800 1.500c3 4 3 9 0 13"/></g></svg>
 <div class="t" style="left:1213px;top:10.500px;font-size:12px;line-height:18px;color:#f1f1f1;letter-spacing:-.75px">ENG</div>
 <div class="t" style="left:1237.500px;top:1.500px;width:80px;text-align:center;font-size:12px;line-height:18px;color:#f1f1f1;letter-spacing:-.65px">09:51</div>
 <div class="t" style="left:1238.500px;top:19.500px;width:80px;text-align:center;font-size:12px;line-height:18px;color:#f1f1f1;letter-spacing:-.3px">15/05/2025</div>
 <!-- notifications -->
 <svg style="left:1324px;top:11px" width="26" height="26" viewBox="0 0 26 26"><path d="M1 1h16v12.500h-3.500V17L10 13.500H1z" fill="#fff"/><path d="M3.500 4.500h11M3.500 7.300h11M3.500 10h11" stroke="#252526" stroke-width="1.100"/><circle cx="16.600" cy="16.400" r="7.500" fill="#2a2b2c" stroke="#8a8b8c" stroke-width="1"/></svg>
 <div class="t" style="left:1332px;top:19px;width:17px;text-align:center;font-size:12.500px;font-weight:bold;line-height:17px;color:#fff">4</div>
 <div class="t" style="left:1361px;top:0;width:1px;height:40px;background:#6a6b6c"></div>
</div>

</body></html>
